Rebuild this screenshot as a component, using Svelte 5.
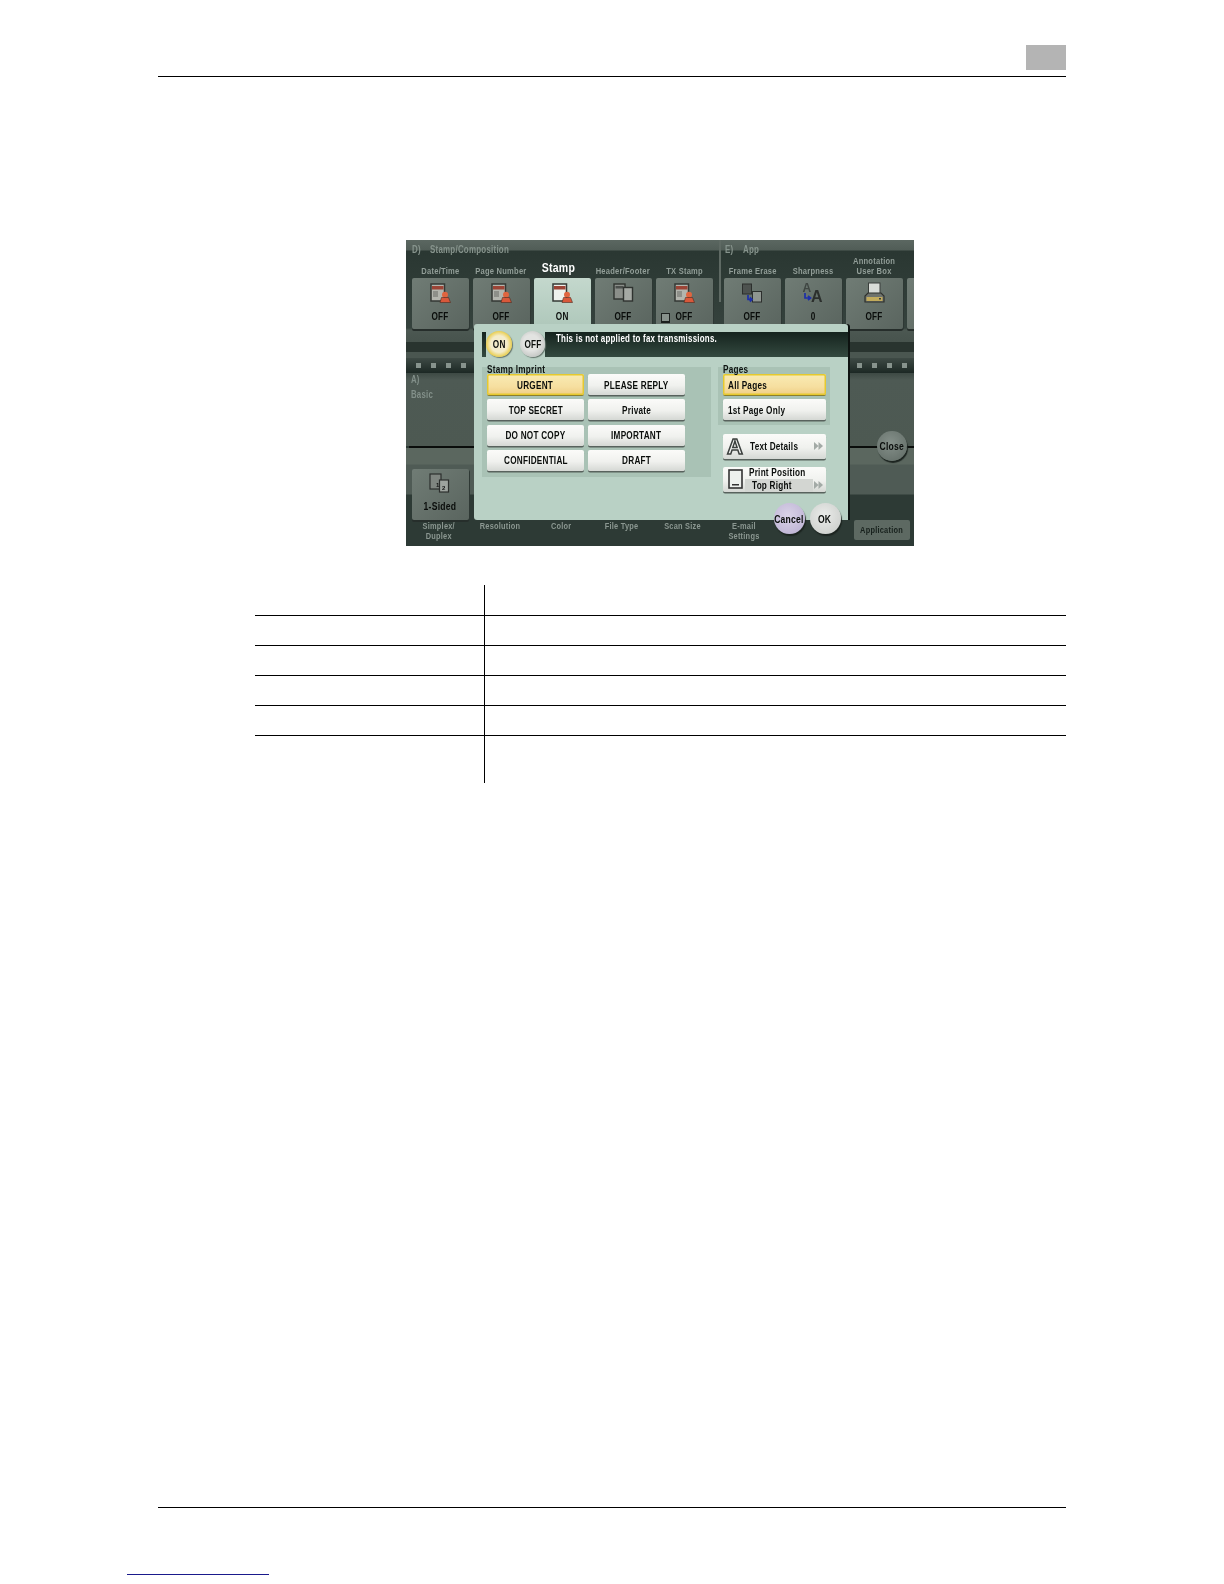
<script>
  const groupD = [
    { label: "Date/Time", icon: "stamp", value: "OFF" },
    { label: "Page Number", icon: "stamp", value: "OFF" },
    { label: "Stamp", icon: "stampOn", value: "ON", active: true },
    { label: "Header/Footer", icon: "docs", value: "OFF" },
    { label: "TX Stamp", icon: "stamp", value: "OFF", check: true }
  ];
  const groupE = [
    { label: "Frame Erase", icon: "frame", value: "OFF" },
    { label: "Sharpness", icon: "sharp", value: "0" },
    { label: "Annotation\nUser Box", icon: "printer", value: "OFF" },
    { label: "", icon: "", value: "" }
  ];
  const imprints = [
    ["URGENT", true], ["PLEASE REPLY", false],
    ["TOP SECRET", false], ["Private", false],
    ["DO NOT COPY", false], ["IMPORTANT", false],
    ["CONFIDENTIAL", false], ["DRAFT", false]
  ];
  const bottomTabs = ["Simplex/\nDuplex", "Resolution", "Color", "File Type", "Scan Size", "E-mail\nSettings"];
  const rows = [0, 1, 2, 3, 4, 5];
</script>

{#snippet icon(kind)}
  <svg class="ico" viewBox="0 0 24 22" width="24" height="22">
    {#if kind === "stamp" || kind === "stampOn"}
      <rect x="3" y="3" width="13.5" height="17" fill={kind === "stampOn" ? "#eef1ec" : "#b3b5ae"} stroke="#343835" stroke-width="1.5" />
      <rect x="4" y="5" width="11.5" height="3.5" fill="#9c4436" />
      {#if kind === "stamp"}<rect x="5" y="10" width="5" height="6" fill="#8d8f89" />{/if}
      <circle cx="17" cy="13.8" r="3" fill="#e0653f" />
      <path d="M12 21.5 L13.5 16.5 H20.5 L22.5 21.5 Z" fill="#d9583a" stroke="#4e2a20" stroke-width=".6" />
    {:else if kind === "docs"}
      <rect x="3" y="3" width="11" height="15" fill="#8b8f8a" stroke="#2f3330" stroke-width="1.4" />
      <rect x="4.5" y="5" width="8" height="2.5" fill="#4b4f4c" />
      <rect x="12.5" y="6.5" width="9" height="13.5" fill="#a5a9a4" stroke="#2f3330" stroke-width="1.4" />
    {:else if kind === "frame"}
      <rect x="2.5" y="3" width="9" height="10" fill="#4d524f" stroke="#2c2f2d" />
      <rect x="12.5" y="10.5" width="9" height="10.5" fill="#8f9590" stroke="#2c2f2d" />
      <path d="M8 14 V18.5 H11.5 M9.8 16.5 L12 18.5 L9.8 20.5" fill="none" stroke="#1d2fa8" stroke-width="1.7" />
    {:else if kind === "sharp"}
      <text x="1.5" y="11" class="glyph small">A</text>
      <text x="10" y="20.5" class="glyph big">A</text>
      <path d="M4 12 V17 H9 M7 15 L9.5 17 L7 19" fill="none" stroke="#1d2fa8" stroke-width="1.7" />
    {:else if kind === "printer"}
      <rect x="6.5" y="2" width="11.5" height="11" fill="#d9dcd8" stroke="#3a3f3c" />
      <path d="M6 12 H19 L22 15 V21 H3 V15 Z" fill="#6f736d" stroke="#2e302c" stroke-width="1.2" />
      <rect x="4.5" y="16" width="16" height="4" fill="#c2ab5c" />
      <rect x="17" y="17" width="2" height="1.5" fill="#3a3f3c" />
    {:else if kind === "duplex"}
      <rect x="2" y="2" width="11" height="15" fill="#7f8580" stroke="#2c2f2d" stroke-width="1.2" />
      <rect x="11.5" y="8" width="9" height="12" fill="#9da39e" stroke="#2c2f2d" stroke-width="1.2" />
      <text x="8" y="15" class="glyph num">1</text>
      <text x="14" y="18" class="glyph num">2</text>
    {/if}
  </svg>
{/snippet}

{#snippet tile(t)}
  <div class="tile" class:on={t.active}>
    {#if t.icon}{@render icon(t.icon)}{/if}
    <span class="tile-val n">{t.value}</span>
    {#if t.check}<span class="check"></span>{/if}
  </div>
{/snippet}

{#snippet arrows()}
  <svg class="arrows" viewBox="0 0 9 8" width="9" height="8">
    <path d="M0 0 L4.5 4 L0 8 Z M4.5 0 L9 4 L4.5 8 Z" fill="#a3aaa6" />
  </svg>
{/snippet}

<div class="page">
  <header class="head">
    <div class="chapter"></div>
  </header>

  <section class="screen">
    <div class="top">
      <div class="group d">
        <div class="g-title"><span class="g-no n l">D)</span><span class="n l">Stamp/Composition</span></div>
        <div class="tiles">
          {#each groupD as t}
            <div class="col">
              <div class="tab" class:cur={t.active}><span class="n">{t.label}</span></div>
              {@render tile(t)}
            </div>
          {/each}
        </div>
      </div>
      <div class="divider"></div>
      <div class="group e">
        <div class="g-title"><span class="g-no n l">E)</span><span class="n l">App</span></div>
        <div class="tiles">
          {#each groupE as t}
            <div class="col">
              <div class="tab"><span class="n">{t.label}</span></div>
              {@render tile(t)}
            </div>
          {/each}
        </div>
      </div>
    </div>

    <div class="band-dark"></div>
    <div class="band-mid"></div>
    <div class="dots">
      <div class="dot-set"><i></i><i></i><i></i><i></i></div>
      <div class="dot-set"><i></i><i></i><i></i><i></i></div>
    </div>
    <div class="basic"><span class="n l">A)</span><span class="n l">Basic</span></div>
    <div class="rule"></div>
    <div class="lower">
      <div class="tile one">
        {@render icon("duplex")}
        <span class="tile-val n">1-Sided</span>
      </div>
    </div>
    <div class="tabs-bottom">
      {#each bottomTabs as b}
        <div class="b-tab"><span class="n">{b}</span></div>
      {/each}
      <div class="app-btn"><span class="n">Application</span></div>
    </div>

    <button class="round close"><span class="n">Close</span></button>

    <div class="dialog">
      <div class="strip">
        <div class="notch">
          <button class="round on-btn"><span class="n">ON</span></button>
          <button class="round off-btn"><span class="n">OFF</span></button>
        </div>
        <p class="note"><span class="n l">This is not applied to fax transmissions.</span></p>
      </div>

      <div class="body">
        <div class="panel imprint">
          <div class="p-label"><span class="n l">Stamp Imprint</span></div>
          <div class="imprint-grid">
            {#each imprints as [txt, sel]}
              <button class="key" class:sel><span class="n">{txt}</span></button>
            {/each}
          </div>
        </div>

        <div class="side">
          <div class="panel pages">
            <div class="p-label"><span class="n l">Pages</span></div>
            <button class="key left sel"><span class="n l">All Pages</span></button>
            <button class="key left"><span class="n l">1st Page Only</span></button>
          </div>
          <button class="key wide">
            <svg class="a-ico" viewBox="0 0 20 20" width="20" height="20">
              <text x="10" y="18" text-anchor="middle" class="a-glyph">A</text>
            </svg>
            <span class="n l">Text Details</span>
            {@render arrows()}
          </button>
          <button class="key wide pos">
            <svg class="doc-ico" viewBox="0 0 15 20" width="15" height="20">
              <rect x="1" y="1" width="13" height="18" fill="#eef1ee" stroke="#333" stroke-width="1.6" />
              <rect x="4" y="15" width="7" height="1.5" fill="#333" />
            </svg>
            <span class="pos-txt">
              <span class="pos-a"><span class="n l">Print Position</span></span>
              <span class="pos-b"><span class="n l">Top Right</span></span>
            </span>
            {@render arrows()}
          </button>
        </div>
      </div>

      <button class="round cancel"><span class="n">Cancel</span></button>
      <button class="round ok"><span class="n">OK</span></button>
    </div>
  </section>

  <table class="spec">
    <tbody>
      {#each rows as r}
        <tr class:first={r === 0} class:tall={r === 5}><td></td><td></td></tr>
      {/each}
    </tbody>
  </table>

  <footer class="foot"></footer>
  <div class="link-line"></div>
</div>

<style>
  :global(body) {
    margin: 0;
    background: #fff;
  }

  .page {
    width: 1224px;
    height: 1584px;
    overflow: hidden;
    font-family: "Liberation Sans", Arial, sans-serif;
  }

  /* the panel's lettering is a narrow face, no condensed family is installed */
  .n {
    display: inline-block;
    white-space: pre;
    transform: scaleX(0.78);
  }

  .n.l {
    transform-origin: left center;
  }

  .head {
    margin-left: 158px;
    width: 908px;
    padding-top: 45px;
    padding-bottom: 6px;
    border-bottom: 1.5px solid #000;
    display: flex;
    justify-content: flex-end;
  }

  .chapter {
    width: 40px;
    height: 25px;
    background: #b4b4b4;
  }

  .screen {
    position: relative;
    margin: 162.5px 0 0 406px;
    width: 508px;
    height: 306px;
    overflow: hidden;
    display: flex;
    flex-direction: column;
    background: #2d3a35;
    font-weight: 700;
    letter-spacing: 0.3px;
    filter: blur(0.35px);
  }

  .top {
    height: 102px;
    flex: none;
    display: flex;
    background: linear-gradient(#5b6761 0, #515d57 10px, #2a3732 11px, #35423d 88px, #4c5852 90px, #47534d 102px);
  }

  .group {
    flex: none;
  }

  .group.d {
    padding-left: 6px;
  }

  .g-title {
    height: 14px;
    display: flex;
    align-items: center;
    padding-top: 6px;
    box-sizing: border-box;
    font-size: 10.2px;
    line-height: 8px;
    color: #87948d;
  }

  .g-no {
    width: 18px;
  }

  .group.e .g-title {
    padding-left: 1px;
  }

  .tiles {
    display: flex;
    gap: 4.5px;
  }

  .col {
    width: 56.5px;
    flex: none;
    display: flex;
    flex-direction: column;
  }

  .tab {
    height: 24px;
    box-sizing: border-box;
    padding-bottom: 1.5px;
    display: flex;
    align-items: flex-end;
    justify-content: center;
    text-align: center;
    font-size: 9.7px;
    line-height: 10px;
    color: #929e98;
  }

  .tab.cur {
    font-size: 13.5px;
    color: #fff;
    padding: 0 7px 5px 0;
  }

  .divider {
    width: 2.5px;
    height: 62px;
    flex: none;
    margin: 0 3px 0 6px;
    background: #5f6a64;
  }

  .tile {
    position: relative;
    height: 51px;
    box-sizing: border-box;
    padding-top: 3px;
    display: flex;
    flex-direction: column;
    align-items: center;
    border-radius: 2px;
    background: linear-gradient(135deg, #707c75, #5a655f);
    box-shadow: 0 2px 0 #262e2b, 1px 1px 0 #2e3834;
  }

  .tile.on {
    background: linear-gradient(#c4d8cd, #aec7ba);
    box-shadow: none;
  }

  .ico {
    flex: none;
  }

  .tile-val {
    margin-top: 7px;
    font-size: 10.5px;
    line-height: 12px;
    color: #0a0d0b;
  }

  .check {
    position: absolute;
    left: 4.5px;
    top: 35px;
    width: 7px;
    height: 7px;
    border: 1px solid #1c201e;
    border-bottom-width: 2px;
    background: #87918b;
  }

  .glyph {
    font-family: "Liberation Sans", Arial, sans-serif;
    letter-spacing: 0;
  }

  .glyph.small {
    font-size: 12px;
    fill: #3f4642;
  }

  .glyph.big {
    font-size: 16px;
    fill: #2c2f2d;
  }

  .glyph.num {
    font-size: 6px;
    fill: #111;
  }

  .band-dark {
    height: 10px;
    flex: none;
    background: #29342f;
  }

  .band-mid {
    height: 6px;
    flex: none;
    background: #4a5650;
  }

  .dots {
    height: 15px;
    flex: none;
    padding: 0 7px 0 10px;
    display: flex;
    justify-content: space-between;
    align-items: center;
    background: linear-gradient(#3e4a45, #1c2824);
  }

  .dot-set {
    display: flex;
    gap: 10px;
  }

  .dot-set i {
    width: 5px;
    height: 5px;
    background: #87938d;
  }

  .basic {
    height: 73px;
    flex: none;
    box-sizing: border-box;
    padding: 2px 0 0 5px;
    display: flex;
    flex-direction: column;
    align-items: flex-start;
    gap: 5.5px;
    font-size: 10px;
    line-height: 10px;
    color: #83908a;
    background: linear-gradient(#3d4944 0, #4e5a54 7px, #4d5952 100%);
  }

  .rule {
    height: 2px;
    flex: none;
    margin-left: 3px;
    background: #0a0d0b;
  }

  .lower {
    height: 72px;
    flex: none;
    box-sizing: border-box;
    padding: 21px 0 0 6px;
    background: linear-gradient(#5b675f 0, #5b675f 16px, #4f5b55 17px, #4f5b55 46px, #2d3a35 47px);
  }

  .tile.one {
    width: 56.5px;
  }

  .tile.one .tile-val {
    margin-top: 6px;
    font-size: 11px;
  }

  .tabs-bottom {
    height: 26px;
    flex: none;
    display: flex;
    padding-left: 2.5px;
    background: #2d3a35;
  }

  .b-tab {
    width: 61px;
    flex: none;
    padding-top: 1px;
    text-align: center;
    font-size: 9.5px;
    line-height: 10px;
    color: #8b9791;
  }

  .app-btn {
    margin-left: auto;
    margin-right: 4px;
    width: 56px;
    height: 20px;
    text-align: center;
    font-size: 9.5px;
    line-height: 20px;
    color: #17201c;
    border-radius: 2px;
    background: #5d6962;
  }

  .round {
    padding: 0;
    border: 0;
    border-radius: 50%;
    overflow: visible;
    font: inherit;
    letter-spacing: inherit;
    color: #0a0d0b;
    font-size: 11px;
    box-shadow: 1px 2px 1px #1c2420;
  }

  .round .n {
    margin: 0 -4px;
  }

  .close {
    position: absolute;
    left: 471px;
    top: 191px;
    width: 30px;
    height: 30px;
    background: radial-gradient(circle at 45% 40%, #85908a, #5f6a64);
  }

  .dialog {
    position: absolute;
    left: 68px;
    top: 84px;
    width: 374px;
    height: 196px;
    box-sizing: border-box;
    padding-top: 8px;
    border-radius: 3px 3px 0 3px;
    background: #b9d1c5;
    box-shadow: 2px 0 0 #0d1210;
  }

  .strip {
    height: 25px;
    margin-left: 8px;
    display: flex;
    background: linear-gradient(#15231e, #33493f);
  }

  .notch {
    margin-left: 4px;
    width: 59px;
    height: 25px;
    flex: none;
    display: flex;
    justify-content: space-between;
    background: #b9d1c5;
  }

  .on-btn,
  .off-btn {
    width: 26px;
    height: 26px;
    margin-top: -1px;
    font-size: 10.5px;
    box-shadow: 1px 1px 1px #66756d;
  }

  .on-btn {
    background: radial-gradient(circle, #f4eccb 45%, #e9cc47 72%, #dcb92d);
  }

  .off-btn {
    width: 25px;
    background: radial-gradient(circle at 45% 45%, #e2e3e1 40%, #aeb1ae);
  }

  .note {
    margin: 0;
    padding: 1px 0 0 11px;
    font-size: 10.2px;
    line-height: 12px;
    color: #fff;
  }

  .body {
    margin-top: 10px;
    padding-left: 8px;
    display: flex;
    align-items: flex-start;
    gap: 7px;
  }

  .panel {
    box-sizing: border-box;
    background: #a9c2b5;
  }

  .p-label {
    height: 10.5px;
    margin-top: -3px;
    font-size: 10.5px;
    line-height: 8px;
    padding-top: 1px;
    box-sizing: border-box;
    color: #0d1210;
  }

  .imprint {
    width: 229px;
    padding: 0 0 6px 5px;
  }

  .imprint-grid {
    display: grid;
    grid-template-columns: 97px 97px;
    gap: 4.25px 4px;
  }

  .key {
    height: 21px;
    padding: 0;
    border: 0;
    border-radius: 2px;
    font: inherit;
    letter-spacing: inherit;
    font-size: 10.5px;
    color: #0a0d0b;
    background: linear-gradient(#fbfbf9, #f0f1ee 55%, #d5d8d4);
    box-shadow: 0 1.5px 0 #58625d;
  }

  .key.sel {
    background: linear-gradient(#f9ebb4, #f6dfa0 60%, #efce85);
    box-shadow: inset 0 0 0 1.5px #e6c92e, 0 1px 0 #8b7f2d;
  }

  .side {
    width: 112px;
    display: flex;
    flex-direction: column;
    gap: 8px;
  }

  .pages {
    height: 58px;
    padding: 0 4.5px;
    margin-bottom: 1px;
    display: flex;
    flex-direction: column;
    gap: 4px;
  }

  .pages .p-label {
    margin-bottom: -4px;
  }

  .key.left {
    flex: none;
    width: 103px;
    text-align: left;
    padding-left: 5px;
  }

  .key.wide {
    position: relative;
    width: 103px;
    height: 25px;
    margin-left: 5px;
    display: flex;
    align-items: center;
    text-align: left;
  }

  .a-ico {
    margin: 0 5px 0 2px;
    flex: none;
    overflow: visible;
  }

  .a-glyph {
    font-family: "Liberation Sans", Arial, sans-serif;
    font-size: 22px;
    font-weight: 700;
    fill: #f2f3f1;
    stroke: #3b3f3d;
    stroke-width: 1.5;
  }

  .arrows {
    position: absolute;
    right: 3px;
    top: 8.5px;
  }

  .pos .arrows {
    top: 14px;
  }

  .doc-ico {
    margin: 0 6px 0 5px;
    flex: none;
  }

  .pos-txt {
    display: flex;
    flex-direction: column;
    margin-top: -1px;
    line-height: 13px;
  }

  .pos-b {
    margin-left: -4px;
    width: 68px;
    padding-left: 7px;
    box-sizing: border-box;
    background: #d3d6d2;
  }

  .cancel,
  .ok {
    position: absolute;
    top: 179.5px;
    width: 31px;
    height: 31px;
  }

  .cancel {
    left: 299.5px;
    background: radial-gradient(circle at 45% 40%, #dad3e8, #b8add0);
  }

  .ok {
    left: 335.5px;
    background: radial-gradient(circle at 45% 40%, #ebecea, #c6c9c6);
  }

  .spec {
    margin: 39px 0 0 255px;
    width: 811px;
    height: 198px;
    border-collapse: collapse;
    table-layout: fixed;
  }

  .spec tr {
    height: 30px;
  }

  .spec tr.first {
    height: 31px;
  }

  .spec tr.tall {
    height: 47px;
  }

  .spec td {
    padding: 0;
    border-bottom: 1.5px solid #000;
  }

  .spec tr.tall td {
    border-bottom: 0;
  }

  .spec td:first-child {
    width: 229px;
    border-right: 1.5px solid #000;
  }

  .foot {
    margin: 724px 0 0 158px;
    width: 908px;
    border-top: 1.5px solid #000;
  }

  .link-line {
    margin: 66px 0 0 127px;
    width: 142px;
    height: 1.5px;
    background: #1a1a8c;
  }
</style>
